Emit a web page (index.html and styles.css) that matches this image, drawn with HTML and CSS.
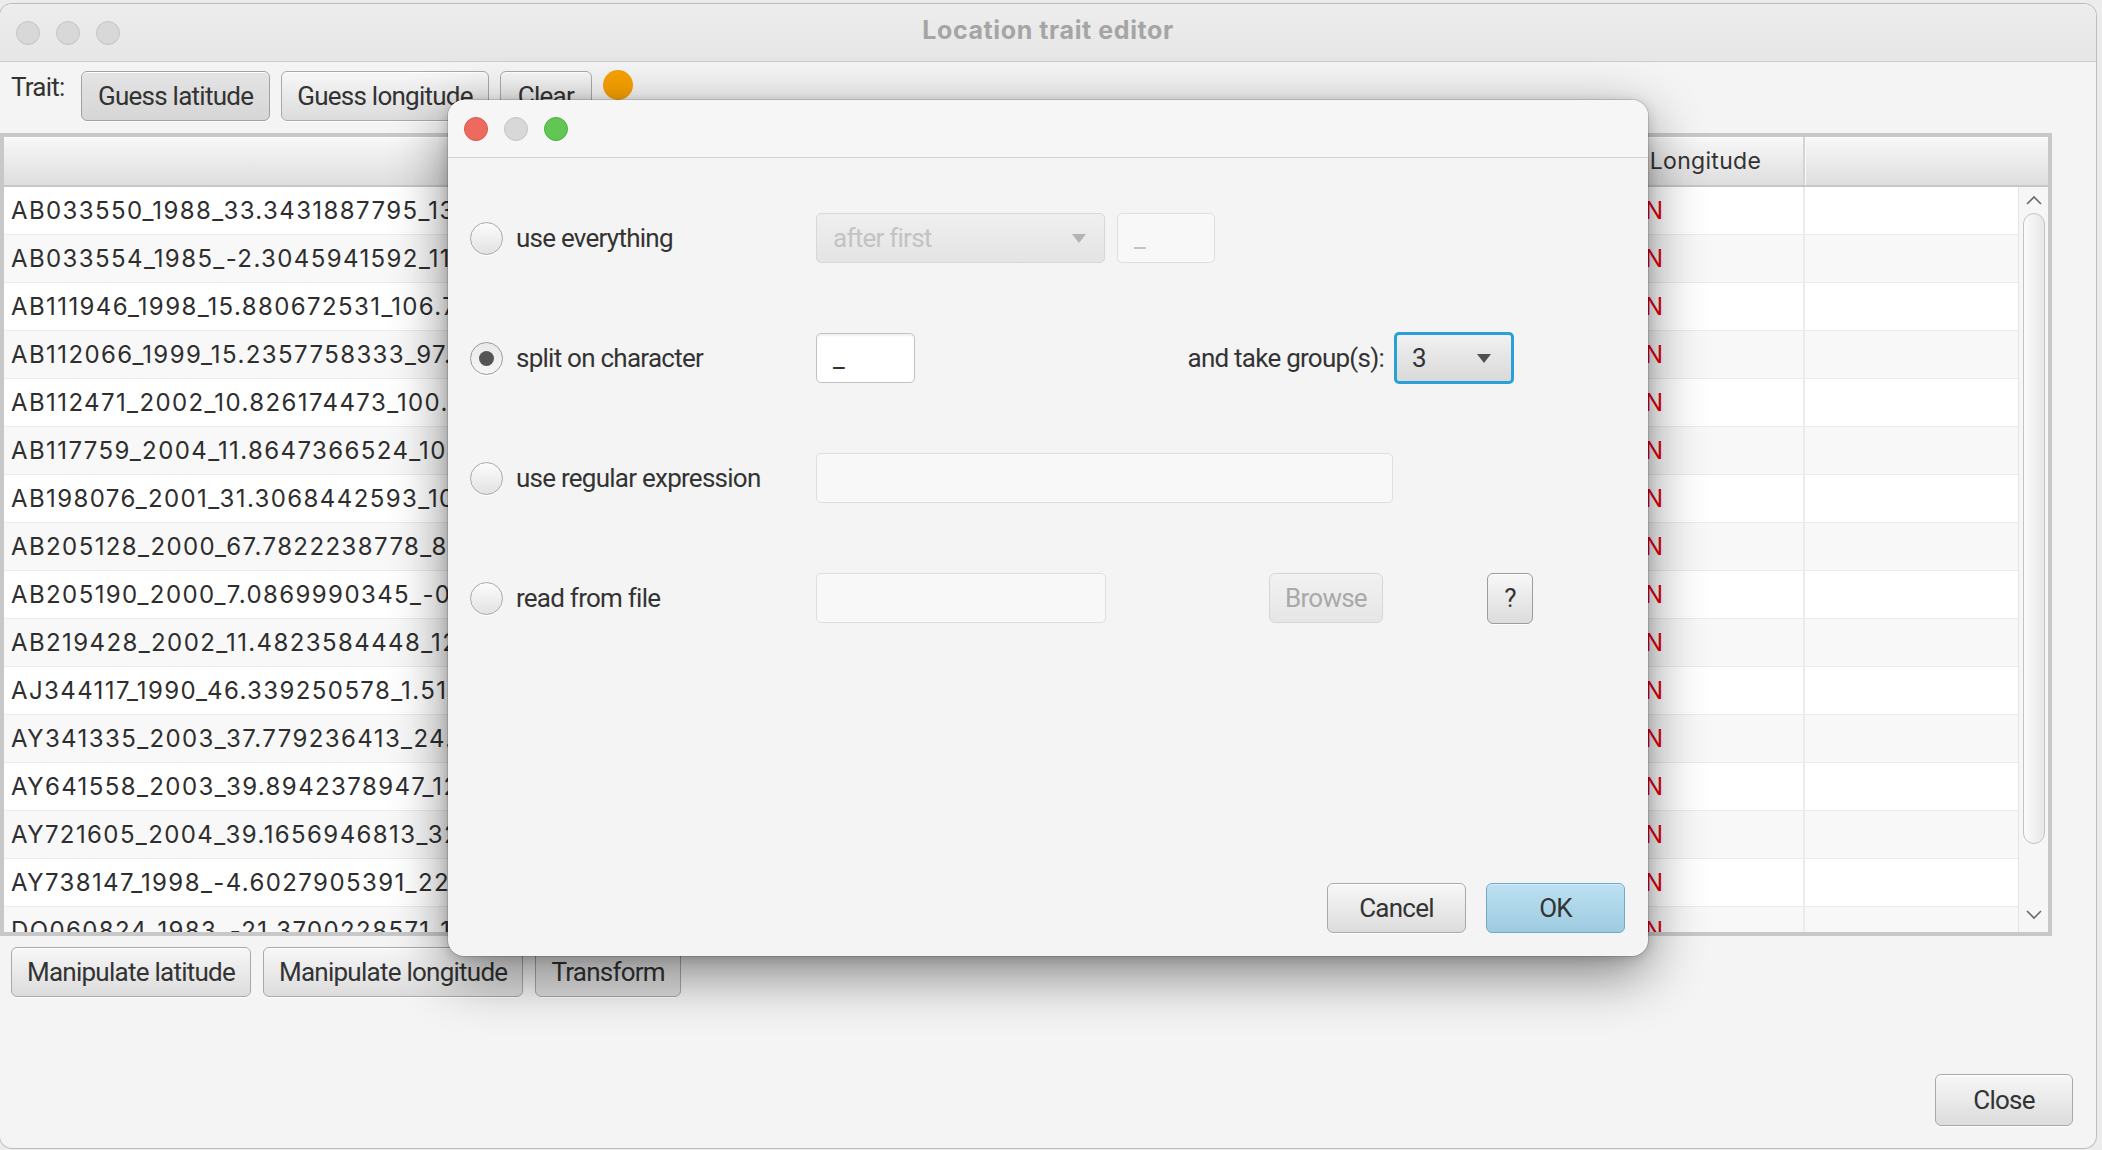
FILE: index.html
```html
<!DOCTYPE html>
<html lang="en">
<head>
<meta charset="utf-8">
<title>Location trait editor</title>
<link rel="stylesheet" href="styles.css">
</head>
<body>
<div class="desktop">
  <div class="window main">
    <div class="titlebar">
      <div class="lights">
        <span class="light"></span><span class="light"></span><span class="light"></span>
      </div>
      <div class="title">Location trait editor</div>
      <div></div>
    </div>
    <div class="toolbar">
      <span class="trait-label">Trait:</span>
      <button class="btn pressed">Guess latitude</button>
      <button class="btn">Guess longitude</button>
      <button class="btn clear">Clear</button>
      <span class="status-dot"></span>
    </div>
    <div class="table">
      <div class="thead">
        <div class="th"></div>
        <div class="th"></div>
        <div class="th">Longitude</div>
        <div class="th"></div>
      </div>
      <div class="tbody">
        <div class="rows">
          <div class="tr"><div class="td">AB033550_1988_33.3431887795_134.9079745</div><div class="td"></div><div class="td na">NaN</div><div class="td"></div></div>
          <div class="tr"><div class="td">AB033554_1985_-2.3045941592_118.7469012</div><div class="td"></div><div class="td na">NaN</div><div class="td"></div></div>
          <div class="tr"><div class="td">AB111946_1998_15.880672531_106.7458214</div><div class="td"></div><div class="td na">NaN</div><div class="td"></div></div>
          <div class="tr"><div class="td">AB112066_1999_15.2357758333_97.1893662</div><div class="td"></div><div class="td na">NaN</div><div class="td"></div></div>
          <div class="tr"><div class="td">AB112471_2002_10.826174473_100.0283512</div><div class="td"></div><div class="td na">NaN</div><div class="td"></div></div>
          <div class="tr"><div class="td">AB117759_2004_11.8647366524_104.9013857</div><div class="td"></div><div class="td na">NaN</div><div class="td"></div></div>
          <div class="tr"><div class="td">AB198076_2001_31.3068442593_107.8826934</div><div class="td"></div><div class="td na">NaN</div><div class="td"></div></div>
          <div class="tr"><div class="td">AB205128_2000_67.7822238778_83.6551473</div><div class="td"></div><div class="td na">NaN</div><div class="td"></div></div>
          <div class="tr"><div class="td">AB205190_2000_7.0869990345_-0.6631862</div><div class="td"></div><div class="td na">NaN</div><div class="td"></div></div>
          <div class="tr"><div class="td">AB219428_2002_11.4823584448_122.5530761</div><div class="td"></div><div class="td na">NaN</div><div class="td"></div></div>
          <div class="tr"><div class="td">AJ344117_1990_46.339250578_1.5159726</div><div class="td"></div><div class="td na">NaN</div><div class="td"></div></div>
          <div class="tr"><div class="td">AY341335_2003_37.779236413_24.2145528</div><div class="td"></div><div class="td na">NaN</div><div class="td"></div></div>
          <div class="tr"><div class="td">AY641558_2003_39.8942378947_126.9876144</div><div class="td"></div><div class="td na">NaN</div><div class="td"></div></div>
          <div class="tr"><div class="td">AY721605_2004_39.1656946813_32.8544091</div><div class="td"></div><div class="td na">NaN</div><div class="td"></div></div>
          <div class="tr"><div class="td">AY738147_1998_-4.6027905391_22.3309217</div><div class="td"></div><div class="td na">NaN</div><div class="td"></div></div>
          <div class="tr"><div class="td">DQ060824_1983_-21.3700228571_19.7462830</div><div class="td"></div><div class="td na">NaN</div><div class="td"></div></div>
        </div>
        <div class="vscroll">
          <div class="arrow up"><svg width="16" height="10" viewBox="0 0 16 10"><polyline points="1,9 8,2 15,9" fill="none" stroke="#6b6b6b" stroke-width="1.6"/></svg></div>
          <div class="thumb"></div>
          <div class="track-rest"></div>
          <div class="arrow down"><svg width="16" height="10" viewBox="0 0 16 10"><polyline points="1,1 8,8 15,1" fill="none" stroke="#6b6b6b" stroke-width="1.6"/></svg></div>
        </div>
      </div>
    </div>
    <div class="actions">
      <button class="btn">Manipulate latitude</button>
      <button class="btn">Manipulate longitude</button>
      <button class="btn">Transform</button>
    </div>
    <div class="footer">
      <button class="btn close">Close</button>
    </div>
  </div>

  <div class="window dialog">
    <div class="titlebar dlg-titlebar">
      <div class="lights">
        <span class="light red"></span><span class="light"></span><span class="light green"></span>
      </div>
    </div>
    <div class="dlg-body">
      <div class="opt-rows">
        <div class="opt-row">
          <span class="radio"></span>
          <span class="opt-label">use everything</span>
          <div class="combo disabled w-after"><span>after first</span><svg width="14" height="9" viewBox="0 0 14 9"><polygon points="0,0 14,0 7,9" fill="#b4b4b4"/></svg></div>
          <div class="field disabled w-small">_</div>
        </div>
        <div class="opt-row">
          <span class="radio on"><span class="dot"></span></span>
          <span class="opt-label">split on character</span>
          <div class="field w-split">_</div>
          <span class="group-label">and take group(s):</span>
          <div class="combo focus w-group"><span>3</span><svg width="14" height="9" viewBox="0 0 14 9"><polygon points="0,0 14,0 7,9" fill="#505050"/></svg></div>
        </div>
        <div class="opt-row">
          <span class="radio"></span>
          <span class="opt-label">use regular expression</span>
          <div class="field disabled w-regex"></div>
        </div>
        <div class="opt-row">
          <span class="radio"></span>
          <span class="opt-label">read from file</span>
          <div class="field disabled w-file"></div>
          <button class="btn disabled browse">Browse</button>
          <button class="btn help">?</button>
        </div>
      </div>
      <div class="dlg-buttons">
        <button class="btn dlg">Cancel</button>
        <button class="btn dlg ok">OK</button>
      </div>
    </div>
  </div>
</div>
</body>
</html>
```

FILE: styles.css
```css
* { box-sizing: border-box; }
html, body { margin: 0; padding: 0; }
body {
  width: 2102px;
  height: 1150px;
  overflow: hidden;
  background: #ececec;
  font-family: Roboto, "Liberation Sans", sans-serif;
  color: #333;
}
.desktop {
  position: relative;
  width: 2102px;
  height: 1150px;
  padding-top: 4px;
}

/* ---------- main window ---------- */
.window.main {
  width: 2096px;
  height: 1144px;
  background: #f4f4f4;
  border-radius: 12px;
  box-shadow: 0 0 0 1px #bdbdbd;
  overflow: hidden;
  display: flex;
  flex-direction: column;
}
.titlebar {
  flex: none;
  height: 58px;
  display: grid;
  grid-template-columns: 1fr auto 1fr;
  align-items: center;
  background: linear-gradient(#ededed, #e6e6e6);
  border-bottom: 1px solid #cdcdcd;
}
.lights {
  display: flex;
  gap: 16px;
  padding-left: 16px;
}
.light {
  width: 24px;
  height: 24px;
  border-radius: 50%;
  background: #d8d8d8;
  border: 1px solid #c4c4c4;
}
.light.red { background: #ee6a5f; border-color: #d9574c; }
.light.green { background: #62c655; border-color: #50ad43; }
.title {
  font-family: Inter, Roboto, sans-serif;
  font-weight: 700;
  font-size: 25px;
  color: #a5a5a5;
  letter-spacing: 0.6px;
  padding-bottom: 5px;
}

.toolbar {
  flex: none;
  height: 71px;
  display: flex;
  align-items: flex-start;
  gap: 11px;
  padding: 9px 0 0 11px;
}
.trait-label {
  width: 59px;
  font-size: 26px;
  letter-spacing: -0.75px;
  line-height: 32px;
  color: #333;
}
.status-dot {
  width: 30px;
  height: 30px;
  margin-top: -1px;
  border-radius: 50%;
  background: #f6a100;
}

.btn {
  font-family: Roboto, "Liberation Sans", sans-serif;
  font-size: 26px;
  letter-spacing: -0.75px;
  color: #333;
  height: 50px;
  padding: 0 15px;
  border: 1px solid #a9a9a9;
  border-radius: 6px;
  background: linear-gradient(#f7f7f7, #dcdcdc);
  box-shadow: inset 0 1px 0 #ffffff, 0 1px 0 rgba(255, 255, 255, 0.9);
  white-space: nowrap;
}
.btn.pressed { background: linear-gradient(#e4e4e4, #d6d6d6); border-color: #a2a2a2; padding: 0 16px; }
.btn.clear { padding: 0 17px; }

/* ---------- table ---------- */
.table {
  flex: none;
  width: 2052px;
  height: 803px;
  border: 4px solid #c8c8c8;
  background: #ffffff;
  display: flex;
  flex-direction: column;
}
.thead {
  flex: none;
  height: 50px;
  display: grid;
  grid-template-columns: 1202px 400px 197px 1fr;
  background: linear-gradient(#f8f8f8, #dedede);
  border-bottom: 2px solid #c6c6c6;
  box-shadow: inset 0 1px 0 #ffffff;
}
.th {
  display: flex;
  align-items: center;
  justify-content: center;
  font-family: Inter, Roboto, sans-serif;
  font-size: 23px;
  letter-spacing: 0.3px;
  color: #333;
  border-left: 2px solid #d4d4d4;
  box-shadow: inset 1px 0 0 #fafafa;
}
.th:first-child { border-left: none; box-shadow: none; }
.tbody {
  flex: 1;
  min-height: 0;
  display: flex;
  overflow: hidden;
}
.rows { flex: 1; overflow: hidden; }
.tr {
  height: 48px;
  display: grid;
  grid-template-columns: 1202px 400px 197px 1fr;
  border-bottom: 1px solid #ebebeb;
  background: #ffffff;
}
.tr:nth-child(even) { background: #f8f8f8; }
.td {
  padding-left: 7px;
  line-height: 47px;
  font-family: Inter, Roboto, sans-serif;
  font-size: 24px;
  letter-spacing: 1.4px;
  color: #2e2e2e;
  white-space: nowrap;
  overflow: hidden;
  border-left: 2px solid #ebebeb;
}
.td:first-child { border-left: none; }
.td.na { color: #e3000f; padding-left: 5px; letter-spacing: 0.2px; }

.vscroll {
  flex: none;
  width: 30px;
  display: flex;
  flex-direction: column;
  align-items: center;
  background: #f6f6f6;
  border-left: 1px solid #e4e4e4;
}
.arrow {
  flex: none;
  height: 26px;
  display: flex;
  align-items: center;
  justify-content: center;
}
.arrow.down { height: 22px; align-items: flex-start; }
.thumb {
  flex: none;
  width: 22px;
  height: 631px;
  border: 1px solid #c3c3c3;
  border-radius: 11px;
  background: linear-gradient(90deg, #fbfbfb, #e7e7e7);
}
.track-rest { flex: 1; }

.actions {
  flex: none;
  display: flex;
  gap: 12px;
  padding: 11px 0 0 11px;
}
.footer {
  flex: 1;
  display: flex;
  justify-content: flex-end;
  align-items: flex-end;
  padding: 0 23px 22px 0;
}
.btn.close { width: 138px; height: 52px; padding: 0; }

/* ---------- dialog ---------- */
.window.dialog {
  position: absolute;
  left: 448px;
  top: 100px;
  width: 1200px;
  height: 856px;
  background: #f4f4f4;
  border-radius: 16px;
  box-shadow: 0 18px 55px rgba(0, 0, 0, 0.48), 0 2px 12px rgba(0, 0, 0, 0.16), 0 0 0 1px rgba(0, 0, 0, 0.12);
  display: flex;
  flex-direction: column;
  overflow: hidden;
}
.dlg-titlebar {
  display: flex;
  background: #f6f6f6;
  border-bottom: 1px solid #d3d3d3;
}
.dlg-body {
  flex: 1;
  display: flex;
  flex-direction: column;
  padding: 55px 23px 23px 22px;
}
.opt-rows {
  display: flex;
  flex-direction: column;
  gap: 70px;
}
.opt-row {
  height: 50px;
  display: flex;
  align-items: center;
  font-size: 26px;
  letter-spacing: -0.75px;
  color: #333;
}
.radio {
  flex: none;
  width: 33px;
  height: 33px;
  border-radius: 50%;
  border: 1px solid #a9a9a9;
  background: linear-gradient(#fcfcfc, #e2e2e2);
  box-shadow: 0 1px 0 #ffffff;
  display: flex;
  align-items: center;
  justify-content: center;
}
.radio.on { border-color: #9a9a9a; background: linear-gradient(#e9e9e9, #f6f6f6); }
.radio .dot {
  width: 15px;
  height: 15px;
  border-radius: 50%;
  background: #555555;
}
.opt-label {
  flex: none;
  width: 313px;
  padding-left: 13px;
  white-space: nowrap;
}
.field {
  flex: none;
  height: 50px;
  border: 1px solid #c2c2c2;
  border-radius: 5px;
  background: #ffffff;
  box-shadow: inset 0 2px 2px rgba(0, 0, 0, 0.06);
  padding-left: 16px;
  display: flex;
  align-items: center;
  color: #333;
}
.field.disabled {
  background: #f8f8f8;
  border-color: #dfdfdf;
  box-shadow: none;
  color: #c2c2c2;
}
.combo {
  flex: none;
  height: 50px;
  border: 1px solid #d7d7d7;
  border-radius: 5px;
  background: linear-gradient(#efefef, #e4e4e4);
  display: flex;
  align-items: center;
  justify-content: space-between;
  padding: 0 18px 0 16px;
}
.combo.disabled { color: #c3c3c3; }
.combo.focus {
  height: 52px;
  border: 3px solid #2b9fd7;
  background: linear-gradient(#f1f1f1, #d9d9d9);
  padding: 0 20px 0 15px;
  color: #333;
}
.w-after { width: 289px; }
.w-small { width: 98px; margin-left: 12px; }
.w-split { width: 99px; }
.group-label { flex: none; width: 469px; text-align: right; white-space: nowrap; }
.w-group { width: 120px; margin-left: 10px; }
.w-regex { width: 577px; }
.w-file { width: 290px; }
.btn.browse { width: 114px; padding: 0; margin-left: 163px; }
.btn.disabled {
  color: #a9a9a9;
  border-color: #d6d6d6;
  background: linear-gradient(#f1f1f1, #e6e6e6);
  box-shadow: none;
}
.btn.help { width: 46px; height: 51px; padding: 0; margin-left: 104px; border-color: #9c9c9c; }
.dlg-buttons {
  margin-top: auto;
  display: flex;
  justify-content: flex-end;
  gap: 20px;
}
.btn.dlg { width: 139px; padding: 0; }
.btn.ok {
  background: linear-gradient(#bce1f2, #9ecbe1);
  border-color: #74a7c4;
  box-shadow: inset 0 1px 0 #d6eef9;
}
```
